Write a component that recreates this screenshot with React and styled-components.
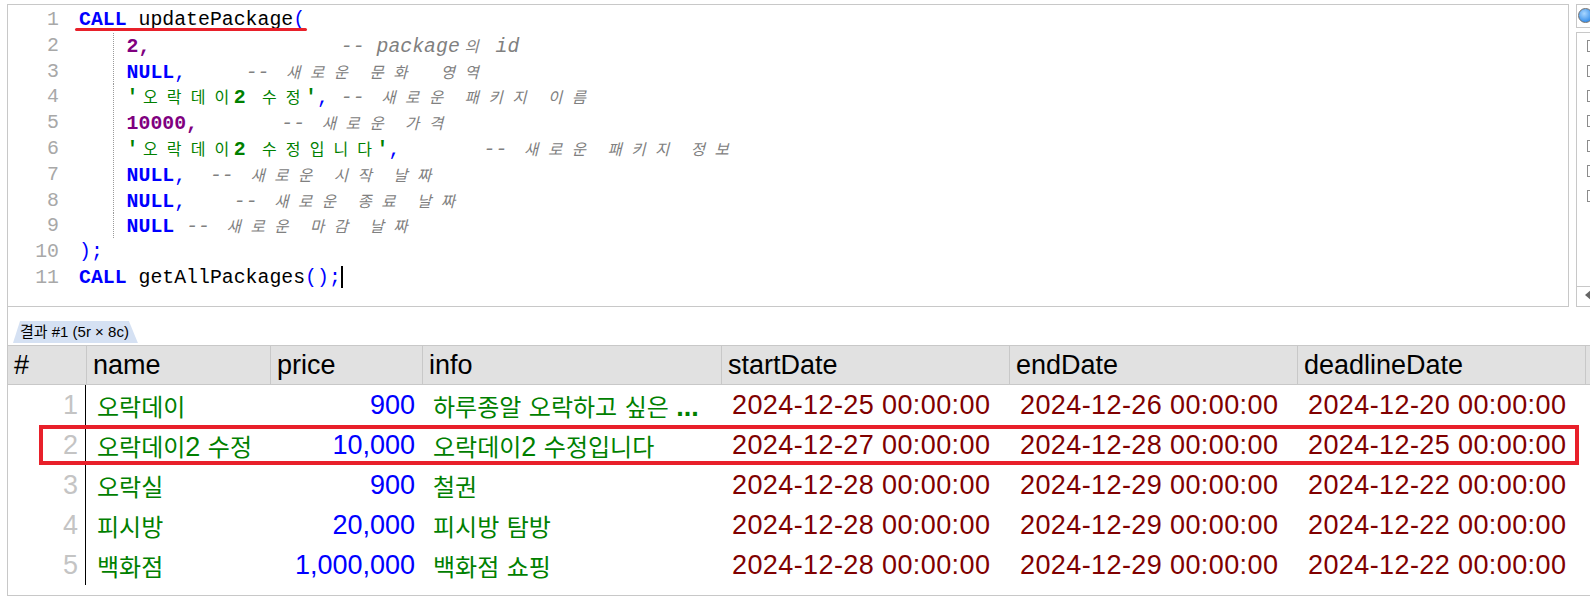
import React from 'react';
import styled, { createGlobalStyle } from 'styled-components';

// editor metrics
const CW = 11.9;
const LINE_H = 25.8;

const HANGUL = /([\u1100-\u11ff\u3130-\u318f\uac00-\ud7af]+)/;
const isHangul = (s) => /[\u1100-\u11ff\u3130-\u318f\uac00-\ud7af]/.test(s);

const codeLines = [
  { mark: true, segs: [['kw', 'CALL'], ['id', ' updatePackage'], ['op', '(']] },
  { segs: [['sp', '    '], ['num', '2,'], ['sp', ' '.repeat(16)], ['cm', '-- package의 id']] },
  { segs: [['sp', '    '], ['kw', 'NULL'], ['op', ','], ['sp', '     '], ['cm', '-- 새로운 문화  영역']] },
  { segs: [['sp', '    '], ['str', "'오락데이2 수정'"], ['op', ','], ['sp', ' '], ['cm', '-- 새로운 패키지 이름']] },
  { segs: [['sp', '    '], ['num', '10000,'], ['sp', '       '], ['cm', '-- 새로운 가격']] },
  { segs: [['sp', '    '], ['str', "'오락데이2 수정입니다'"], ['op', ','], ['sp', '       '], ['cm', '-- 새로운 패키지 정보']] },
  { segs: [['sp', '    '], ['kw', 'NULL'], ['op', ','], ['sp', '  '], ['cm', '-- 새로운 시작 날짜']] },
  { segs: [['sp', '    '], ['kw', 'NULL'], ['op', ','], ['sp', '    '], ['cm', '-- 새로운 종료 날짜']] },
  { segs: [['sp', '    '], ['kw', 'NULL'], ['sp', ' '], ['cm', '-- 새로운 마감 날짜']] },
  { segs: [['op', ');']] },
  { cursor: true, segs: [['kw', 'CALL'], ['id', ' getAllPackages'], ['op', '();']] },
];

const columns = ['#', 'name', 'price', 'info', 'startDate', 'endDate', 'deadlineDate'];

const rows = [
  { name: '오락데이', price: '900', info: '하루종알 오락하고 싶은', cut: true, start: '2024-12-25 00:00:00', end: '2024-12-26 00:00:00', deadline: '2024-12-20 00:00:00' },
  { name: '오락데이2 수정', price: '10,000', info: '오락데이2 수정입니다', start: '2024-12-27 00:00:00', end: '2024-12-28 00:00:00', deadline: '2024-12-25 00:00:00' },
  { name: '오락실', price: '900', info: '철권', start: '2024-12-28 00:00:00', end: '2024-12-29 00:00:00', deadline: '2024-12-22 00:00:00' },
  { name: '피시방', price: '20,000', info: '피시방 탐방', start: '2024-12-28 00:00:00', end: '2024-12-29 00:00:00', deadline: '2024-12-22 00:00:00' },
  { name: '백화점', price: '1,000,000', info: '백화점 쇼핑', start: '2024-12-28 00:00:00', end: '2024-12-29 00:00:00', deadline: '2024-12-22 00:00:00' },
];

const GRID_COLS = '78px 184px 152px 299px 288px 288px 288px 1fr';

// every hangul char takes two editor cells, glyph centred in them
const renderWide = (text, size) =>
  text.split(HANGUL).flatMap((part, i) =>
    isHangul(part)
      ? Array.from(part).map((ch, j) => (
          <KoWide key={`${i}-${j}`} $size={size}>
            {ch}
          </KoWide>
        ))
      : [part]
  );

const renderGridText = (text) =>
  text.split(HANGUL).map((part, i) => (isHangul(part) ? <GridKo key={i}>{part}</GridKo> : part));

const renderSeg = ([kind, text], i) => {
  if (kind === 'cm') return <Token key={i} $kind="cm">{renderWide(text, 15.5)}</Token>;
  if (kind === 'str') return <Token key={i} $kind="str">{renderWide(text, 16)}</Token>;
  return <Token key={i} $kind={kind}>{text}</Token>;
};

const App = () => {
  return (
    <>
      <GlobalStyle />
      <Page>
        <TopRow>
          <Editor>
            {codeLines.map((line, i) => (
              <Line key={i}>
                <LineNo>{i + 1}</LineNo>
                <Code $guide={i >= 1 && i <= 8}>
                  {line.mark ? <Marked>{line.segs.map(renderSeg)}</Marked> : line.segs.map(renderSeg)}
                  {line.cursor && <Cursor />}
                </Code>
              </Line>
            ))}
          </Editor>
          <SidePanel>
            <RadioBox>
              <Radio />
            </RadioBox>
            <CheckPanel>
              <CheckList>
                {Array.from({ length: 7 }).map((_, i) => (
                  <Check key={i} />
                ))}
              </CheckList>
              <ArrowButton>
                <ArrowLeft />
              </ArrowButton>
            </CheckPanel>
          </SidePanel>
        </TopRow>

        <Results>
          <Tab>결과 #1 (5r × 8c)</Tab>
          <HeaderRow>
            {columns.map((c, i) => (
              <HeadCell key={c} $first={i === 0}>{c}</HeadCell>
            ))}
            <HeadCell />
          </HeaderRow>
          <Body>
            {rows.map((r, i) => (
              <Row key={i}>
                <NumCell>{i + 1}</NumCell>
                <Cell $color="#008000">
                  <CellText>{renderGridText(r.name)}</CellText>
                </Cell>
                <Cell $color="#0000ff" $right>
                  <CellText>{r.price}</CellText>
                </Cell>
                <Cell $color="#008000">
                  <CellText>
                    {renderGridText(r.info)}
                    {r.cut && <Ellipsis> ...</Ellipsis>}
                  </CellText>
                </Cell>
                <Cell $color="#800000">
                  <DateText>{r.start}</DateText>
                </Cell>
                <Cell $color="#800000">
                  <DateText>{r.end}</DateText>
                </Cell>
                <Cell $color="#800000">
                  <DateText>{r.deadline}</DateText>
                </Cell>
                <Cell />
              </Row>
            ))}
            <Highlight />
          </Body>
        </Results>
      </Page>
    </>
  );
};

export default App;

const GlobalStyle = createGlobalStyle`
  html, body {
    margin: 0;
    padding: 0;
    background: #ffffff;
    overflow: hidden;
  }
  body {
    width: 1590px;
    height: 596px;
    font-family: "Liberation Sans", "Noto Sans CJK KR", sans-serif;
  }
`;

const Page = styled.div`
  display: flex;
  flex-direction: column;
  width: 1590px;
  height: 596px;
  box-sizing: border-box;
  padding: 4px 0 0 7px;
`;

const TopRow = styled.div`
  display: flex;
  height: 303px;
  flex-shrink: 0;
`;

const Editor = styled.div`
  width: 1562px;
  flex-shrink: 0;
  box-sizing: border-box;
  border: 1px solid #c8c8c8;
  padding-top: 2px;
  background: #ffffff;
  font-family: "Liberation Mono", "Noto Sans CJK KR", monospace;
  font-size: 19.83px;
`;

const Line = styled.div`
  display: flex;
  height: ${LINE_H}px;
  line-height: ${LINE_H}px;
  white-space: pre;
`;

const LineNo = styled.div`
  width: 51px;
  flex-shrink: 0;
  text-align: right;
  color: #a8a8a8;
`;

const Code = styled.div`
  flex: 1;
  margin-left: 20px;
  ${(p) =>
    p.$guide &&
    `
    background-image: repeating-linear-gradient(to bottom, #9a9a9a 0 1px, transparent 1px 2px);
    background-size: 1px 100%;
    background-position: 34px 0;
    background-repeat: no-repeat;
  `}
`;

const tokenStyles = {
  kw: 'color: #0000ff; font-weight: bold;',
  id: 'color: #000000;',
  op: 'color: #0000ff;',
  num: 'color: #800080; font-weight: bold;',
  str: 'color: #008000; font-weight: bold;',
  cm: 'color: #808080; font-style: italic;',
  sp: '',
};

const Token = styled.span`
  ${(p) => tokenStyles[p.$kind] || ''}
`;

const KoWide = styled.span`
  display: inline-block;
  width: ${2 * CW}px;
  text-align: center;
  font-family: "Noto Sans CJK KR", sans-serif;
  font-size: ${(p) => p.$size}px;
  font-weight: normal;
`;

const Marked = styled.span`
  position: relative;

  &::after {
    content: '';
    position: absolute;
    left: -4px;
    right: -2px;
    bottom: 0;
    height: 3px;
    border-radius: 2px;
    background: #e8202a;
  }
`;

const Cursor = styled.span`
  display: inline-block;
  width: 2px;
  height: 22px;
  background: #000000;
  vertical-align: -5px;
`;

const SidePanel = styled.div`
  display: flex;
  flex-direction: column;
  gap: 4px;
  width: 60px;
  flex-shrink: 0;
  margin-left: 7px;
`;

const RadioBox = styled.div`
  height: 24px;
  box-sizing: border-box;
  border: 1px solid #c8c8c8;
  padding: 3px 0 0 1px;
`;

const Radio = styled.div`
  width: 15px;
  height: 15px;
  box-sizing: border-box;
  border-radius: 50%;
  border: 1px solid #6f6f6f;
  background: radial-gradient(circle at 40% 35%, #a8d6ff, #3f94ec 70%);
`;

const CheckPanel = styled.div`
  flex: 1;
  display: flex;
  flex-direction: column;
  box-sizing: border-box;
  border: 1px solid #c8c8c8;
`;

const CheckList = styled.div`
  display: flex;
  flex-direction: column;
  gap: 13px;
  padding: 7px 0 0 10px;
`;

const Check = styled.div`
  width: 11px;
  height: 12px;
  box-sizing: border-box;
  border: 1px solid #8c8c8c;
  background: #ffffff;
`;

const ArrowButton = styled.div`
  display: flex;
  align-items: center;
  margin-top: auto;
  margin-bottom: 4px;
  height: 15px;
  border-top: 1px solid #c8c8c8;
  padding-left: 8px;
`;

const ArrowLeft = styled.div`
  width: 0;
  height: 0;
  border-top: 5px solid transparent;
  border-bottom: 5px solid transparent;
  border-right: 6px solid #666666;
`;

const Results = styled.div`
  flex: 1;
  min-width: 0;
  display: flex;
  flex-direction: column;
  border-left: 1px solid #c8c8c8;
  border-bottom: 1px solid #c8c8c8;
  padding-top: 14px;
`;

const Tab = styled.div`
  align-self: flex-start;
  margin: 0 0 2px 5px;
  height: 22px;
  padding: 0 9px 0 7px;
  background: #d5e1f3;
  clip-path: polygon(7px 0, calc(100% - 9px) 0, 100% 100%, 0 100%);
  font-size: 15px;
  line-height: 22px;
  color: #000000;
`;

const HeaderRow = styled.div`
  display: grid;
  grid-template-columns: ${GRID_COLS};
  height: 40px;
  box-sizing: border-box;
  background: #e1e1e1;
  border-top: 1px solid #c8c8c8;
  border-bottom: 1px solid #c8c8c8;
`;

const HeadCell = styled.div`
  display: flex;
  align-items: center;
  padding-left: 6px;
  border-left: ${(p) => (p.$first ? 'none' : '1px solid #c8c8c8')};
  font-size: 27px;
  color: #000000;
  white-space: nowrap;
  overflow: hidden;
`;

const Body = styled.div`
  position: relative;
`;

const Row = styled.div`
  display: grid;
  grid-template-columns: ${GRID_COLS};
  height: 40px;
`;

const NumCell = styled.div`
  display: flex;
  align-items: center;
  justify-content: flex-end;
  padding-right: 7px;
  border-right: 1px solid #000000;
  font-size: 27px;
  color: #c4c4c4;
`;

const Cell = styled.div`
  display: flex;
  align-items: center;
  justify-content: ${(p) => (p.$right ? 'flex-end' : 'flex-start')};
  padding: ${(p) => (p.$right ? '0 7px 0 0' : '0 0 0 11px')};
  font-size: 27px;
  color: ${(p) => p.$color || '#000000'};
  overflow: hidden;
`;

const CellText = styled.span`
  white-space: pre;
`;

const DateText = styled.span`
  white-space: pre;
  letter-spacing: 0.4px;
`;

const GridKo = styled.span`
  font-family: "Noto Sans CJK KR", sans-serif;
  font-size: 24px;
`;

const Ellipsis = styled.span`
  font-weight: bold;
`;

const Highlight = styled.div`
  position: absolute;
  left: 31px;
  top: 40px;
  width: 1540px;
  height: 40px;
  box-sizing: border-box;
  border: 4px solid #e8202a;
  pointer-events: none;
`;
